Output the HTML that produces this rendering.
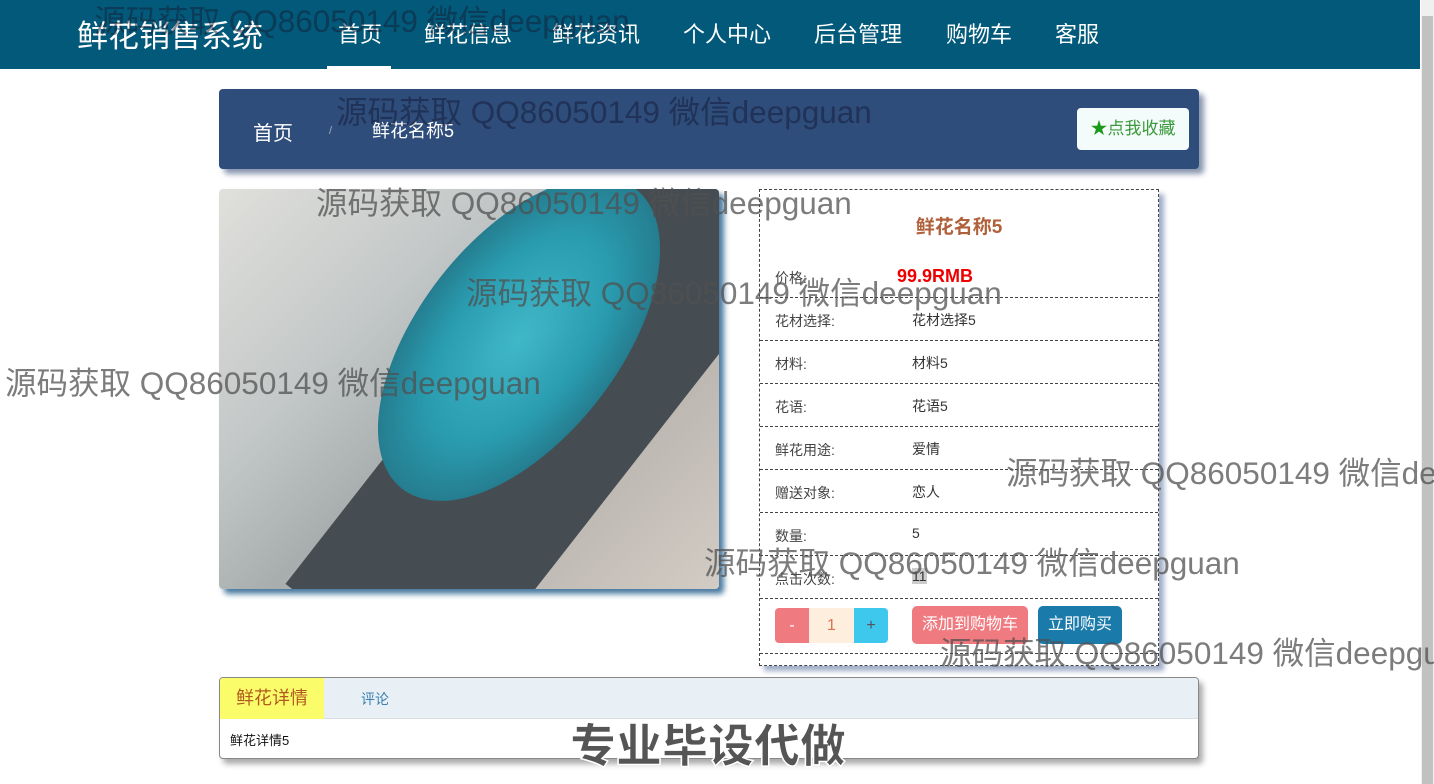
<!DOCTYPE html>
<html><head><meta charset="utf-8"><style>
*{margin:0;padding:0;box-sizing:border-box}
body{width:1434px;height:784px;overflow:hidden;background:#fff;font-family:"Liberation Sans","Noto Sans CJK SC",sans-serif;position:relative}
.nav{position:absolute;left:0;top:0;width:1420px;height:69px;background:#02597a}
.logo{position:absolute;left:77px;top:11px;color:#fff;font-size:31px}
.nav a{position:absolute;top:17px;color:#fff;font-size:22px}
.ul{position:absolute;left:327px;top:66px;width:64px;height:3px;background:#fff}
.sb{position:absolute;left:1421px;top:0;width:13px;height:784px;background:#f0f0f0}
.sb div{position:absolute;left:1px;top:16px;width:11px;height:768px;background:#c1c1c1}
.bc{position:absolute;left:219px;top:89px;width:980px;height:80px;background:#2f4d7a;border-radius:4px;box-shadow:5px 5px 6px #8a96b0}
.bc span{position:absolute;color:#fff;font-size:20px;top:28px}
.fav{position:absolute;left:858px;top:19px;width:112px;height:42px;background:#f4fbfb;border-radius:4px;color:#3a9a3a;font-size:17px;line-height:42px;text-align:center}
.fav b{color:#1a9a1a;font-weight:normal}
.img{position:absolute;left:219px;top:189px;width:500px;height:400px;border-radius:4px;box-shadow:5px 5px 6px #4a7aa0;overflow:hidden;
background:linear-gradient(135deg,#e0e0dc 0%,#c4c8c8 30%,#a8aeae 50%,#bdb8b2 75%,#d2ccc4 100%)}
.box{position:absolute;left:230px;top:-80px;width:200px;height:600px;background:#454c52;transform:rotate(38deg)}
.fl{position:absolute;left:200px;top:-40px;width:200px;height:380px;border-radius:50%;background:radial-gradient(ellipse,#40b8c8 0%,#2a9cb0 45%,#24788a 75%,rgba(40,90,100,0) 100%);transform:rotate(38deg)}
.det{position:absolute;left:759px;top:189px;width:400px;height:477px;border:1px dashed #444;box-shadow:5px 5px 5px #a0aec8;background:#fff}
.t{position:absolute;left:0;width:100%;text-align:center;top:22px;color:#b0603a;font-size:19px;font-weight:bold}
.row{position:absolute;left:0;width:398px;border-bottom:1px dashed #444;font-size:14px;color:#444}
.row .k{position:absolute;left:15px}
.row .v{position:absolute;left:152px;color:#333}
.btn{position:absolute;height:38px;border-radius:5px;color:#fff;font-size:16px;line-height:38px;text-align:center}
.tabs{position:absolute;left:219px;top:677px;width:980px;height:82px;border:1px solid #888;border-radius:4px;box-shadow:4px 5px 6px #aaa;background:#fff;overflow:hidden}
.th{height:41px;background:#e8eff5;border-bottom:1px solid #d8dee5;position:relative}
.wm{position:absolute;color:rgba(80,80,80,.75);font-size:31.5px;white-space:nowrap;font-family:"Liberation Sans","Noto Sans CJK SC",sans-serif}
</style></head><body>
<div class="nav">
<div class="logo">鲜花销售系统</div>
<a style="left:338px">首页</a><a style="left:424px">鲜花信息</a><a style="left:552px">鲜花资讯</a><a style="left:683px">个人中心</a><a style="left:814px">后台管理</a><a style="left:946px">购物车</a><a style="left:1055px">客服</a>
<div class="ul"></div>
</div>
<div class="sb"><div></div></div>
<div class="bc"><span style="left:34px">首页</span><span style="left:110px;font-size:11px;top:36px;color:#aab">/</span><span style="left:153px;font-size:18px">鲜花名称5</span>
<div class="fav"><b>★</b>点我收藏</div></div>
<div class="img"><div class="box"></div><div class="fl"></div></div>
<div class="det">
<div class="t">鲜花名称5</div>
<div class="row" style="top:60px;height:48px"><span class="k" style="top:18px">价格:</span><span class="v" style="left:137px;top:16px;color:#e00;font-size:18px;font-weight:bold">99.9RMB</span></div>
<div class="row" style="top:108px;height:43px"><span class="k" style="top:13px">花材选择:</span><span class="v" style="top:12px">花材选择5</span></div>
<div class="row" style="top:151px;height:43px"><span class="k" style="top:13px">材料:</span><span class="v" style="top:12px">材料5</span></div>
<div class="row" style="top:194px;height:43px"><span class="k" style="top:13px">花语:</span><span class="v" style="top:12px">花语5</span></div>
<div class="row" style="top:237px;height:43px"><span class="k" style="top:13px">鲜花用途:</span><span class="v" style="top:12px">爱情</span></div>
<div class="row" style="top:280px;height:43px"><span class="k" style="top:13px">赠送对象:</span><span class="v" style="top:12px">恋人</span></div>
<div class="row" style="top:323px;height:43px"><span class="k" style="top:13px">数量:</span><span class="v" style="top:12px">5</span></div>
<div class="row" style="top:366px;height:43px"><span class="k" style="top:13px">点击次数:</span><span class="v" style="top:12px;background:#ccc">11</span></div>
<div class="row" style="top:409px;height:55px">
<div class="btn" style="left:15px;top:9px;width:34px;height:35px;background:#ef7a80;border-radius:4px 0 0 4px;line-height:35px">-</div>
<div class="btn" style="left:49px;top:9px;width:45px;height:35px;background:#fdeedd;color:#e07050;line-height:35px;border-radius:0">1</div>
<div class="btn" style="left:94px;top:9px;width:34px;height:35px;background:#3ec8ee;border-radius:0 4px 4px 0;line-height:35px;color:#555">+</div>
<div class="btn" style="left:152px;top:7px;width:116px;background:#ef7a80">添加到购物车</div>
<div class="btn" style="left:278px;top:7px;width:84px;background:#1a7aaa">立即购买</div>
</div>
</div>
<div class="tabs"><div class="th"><div style="position:absolute;left:0;top:0;width:104px;height:41px;background:#fbfc6a;color:#b05a20;font-size:18px;line-height:41px;text-align:center">鲜花详情</div><div style="position:absolute;left:141px;top:11px;color:#3a80b0;font-size:14px">评论</div></div>
<div style="padding:11px 10px;font-size:13px;color:#111">鲜花详情5</div></div>
<div class="wm" style="left:94px;top:-4px;color:rgba(20,30,50,.5)">源码获取 QQ86050149 微信deepguan</div>
<div class="wm" style="left:336px;top:87px;color:rgba(20,30,60,.55)">源码获取 QQ86050149 微信deepguan</div>
<div class="wm" style="left:316px;top:178px">源码获取 QQ86050149 微信deepguan</div>
<div class="wm" style="left:466px;top:268px">源码获取 QQ86050149 微信deepguan</div>
<div class="wm" style="left:5px;top:358px">源码获取 QQ86050149 微信deepguan</div>
<div class="wm" style="left:1006px;top:448px">源码获取 QQ86050149 微信deepguan</div>
<div class="wm" style="left:704px;top:538px">源码获取 QQ86050149 微信deepguan</div>
<div class="wm" style="left:940px;top:628px">源码获取 QQ86050149 微信deepguan</div>
<div style="position:absolute;left:570px;top:710px;font-size:46px;font-weight:900;color:#555;-webkit-text-stroke:1.5px #fff;font-family:'Noto Sans CJK SC',sans-serif">专业毕设代做</div>
</body></html>
